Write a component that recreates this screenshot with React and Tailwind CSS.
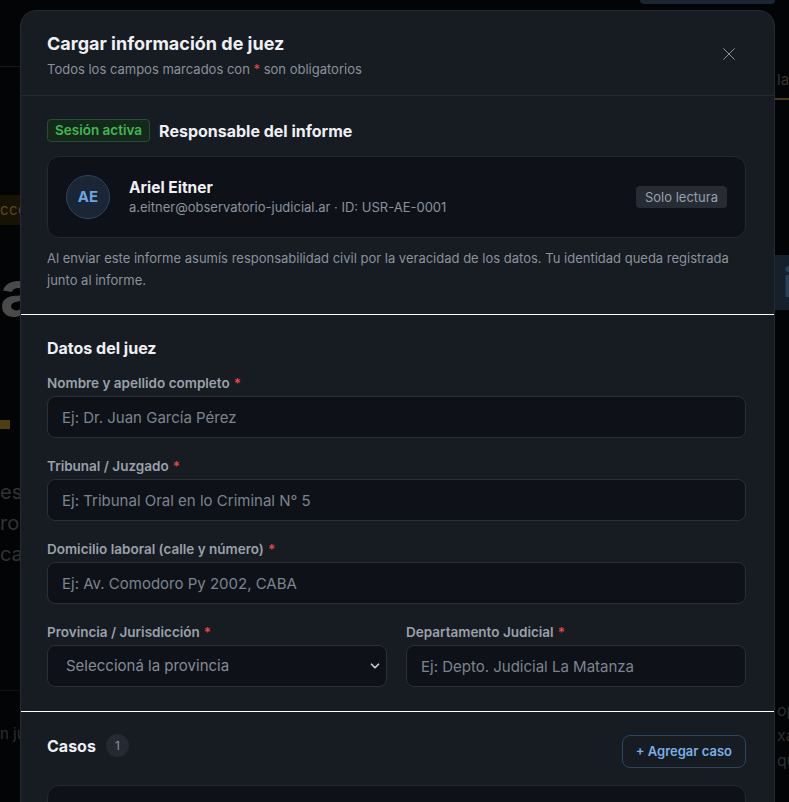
import React from "react";

const Req = () => <span className="ml-[4px] text-[#ef4444]">*</span>;

const Field = ({ label, placeholder }) => (
  <div className="flex flex-col">
    <label className="mb-1 text-[13.5px] leading-[18px] font-semibold text-[#9aa1ab]">
      {label}
      <Req />
    </label>
    <input
      placeholder={placeholder}
      className="h-[42px] w-full rounded-lg border border-[#2a2f38] bg-[#0e1118] px-[14px] text-[15px] text-[#e6e8eb] outline-none placeholder:text-[#7d848e]"
    />
  </div>
);

const SelectField = ({ label, placeholder }) => (
  <div className="flex flex-col">
    <label className="mb-1 text-[13.5px] leading-[18px] font-semibold text-[#9aa1ab]">
      {label}
      <Req />
    </label>
    <div className="flex h-[42px] w-full items-center justify-between rounded-lg border border-[#2a2f38] bg-[#0e1118] pl-[18px] pr-[4px] text-[15px] text-[#858c96]">
      <span>{placeholder}</span>
      <svg width="14" height="14" viewBox="0 0 24 24" fill="none" stroke="#c9cdd2" strokeWidth="3" strokeLinecap="round" strokeLinejoin="round">
        <path d="M6 9l6 6 6-6" />
      </svg>
    </div>
  </div>
);

const Backdrop = () => (
  <div className="flex h-full w-full justify-between text-[#3a3a3a]" style={{ fontFamily: "Inter, 'Liberation Sans', sans-serif" }}>
    {/* left strip */}
    <div className="flex w-[40px] flex-col overflow-hidden">
      <div className="h-[67px] shrink-0 border-b border-[#1a1a1a]" />
      <div className="mt-[128px] flex h-[30px] w-[40px] shrink-0 items-center bg-[#171204] text-[15px] tracking-wide text-[#5a4a22]">cco</div>
      <div className="mt-[38px] h-[60px] shrink-0 text-[64px] leading-[60px] font-bold text-[#4a4a4a]">a</div>
      <div className="mt-[97px] h-[9px] w-[10px] shrink-0 bg-[#4f3e12]" />
      <div className="mt-[48px] flex shrink-0 flex-col text-[20px] leading-[31px] text-[#333333]">
        <span>es</span>
        <span>ron</span>
        <span>ca</span>
      </div>
      <div className="mt-[120px] h-px shrink-0 bg-[#101010]" />
      <div className="mt-[32px] shrink-0 text-[15px] text-[#2e2e2e]">n ju</div>
    </div>
    {/* right strip */}
    <div className="flex w-[150px] flex-col items-end overflow-hidden">
      <div className="mr-[14px] h-[4px] w-[135px] shrink-0 rounded-b-lg bg-[#1b2633]" />
      <div className="mt-[66px] w-[14px] shrink-0 border-b-2 border-[#4a3c16] pb-[8px] pl-[2px] text-[15px] leading-[20px] whitespace-nowrap text-[#333333]">la</div>
      <div className="mt-[155px] flex h-[55px] w-[14px] shrink-0 items-center bg-[#15202c] pl-[8px] text-[40px] font-bold text-[#2c3f52]">i</div>
      <div className="mt-[388px] flex w-[14px] shrink-0 flex-col pl-[2px] text-[16px] leading-[25px] whitespace-nowrap text-[#2e2e2e]">
        <span>opi</span>
        <span>xac</span>
        <span>qu</span>
      </div>
    </div>
  </div>
);

export default function App() {
  return (
    <div className="relative h-[802px] w-full overflow-hidden bg-[#030405]">
      <Backdrop />

      {/* Modal */}
      <div
        className="absolute left-[20px] top-[10px] w-[755px] overflow-hidden rounded-2xl border border-[#262b33] bg-[#171b22]"
        style={{ fontFamily: "Inter, 'Liberation Sans', sans-serif" }}
      >
        {/* Header */}
        <div className="flex items-start justify-between border-b border-[#262b33] pl-[26px] pr-[28px] pt-5 pb-4">
          <div>
            <h2 className="text-[18px] leading-[26px] font-bold text-[#eef0f3]">Cargar información de juez</h2>
            <p className="mt-[2px] text-[13px] leading-[20px] text-[#8b929c]">
              Todos los campos marcados con <span className="text-[#ef4444]">*</span> son obligatorios
            </p>
          </div>
          <button type="button" className="mt-[7px] mr-[1px] flex h-8 w-8 items-center justify-center">
            <svg width="16" height="16" viewBox="0 0 24 24" fill="none" stroke="#8b929c" strokeWidth="1.5" strokeLinecap="round">
              <path d="M4 4l16 16M20 4L4 20" />
            </svg>
          </button>
        </div>

        {/* Responsable */}
        <div className="pl-[26px] pr-[28px] pt-[23px] pb-[23px]">
          <div className="flex items-center gap-[9px]">
            <span className="rounded border border-[#23502f] bg-[#15281c] px-[7px] text-[13.5px] leading-[21px] font-semibold text-[#3fb950]">
              Sesión activa
            </span>
            <span className="text-[16px] leading-[22px] font-bold text-[#eef0f3]">Responsable del informe</span>
          </div>

          <div className="mt-[14px] flex items-center justify-between rounded-xl border border-[#242933] bg-[#0e1118] p-[18px]">
            <div className="flex items-center gap-[19px]">
              <div className="flex h-[44px] w-[44px] items-center justify-center rounded-full border border-[#2c4560] bg-[#1a2636] text-[15px] font-bold text-[#6aa6e0]">
                AE
              </div>
              <div className="flex flex-col">
                <span className="text-[15.5px] leading-[21px] font-bold text-[#eef0f3]">Ariel Eitner</span>
                <span className="text-[13px] leading-[19px] text-[#8b929c]">
                  a.eitner@observatorio-judicial.ar · ID: USR-AE-0001
                </span>
              </div>
            </div>
            <span className="rounded bg-[#262b34] px-[9px] text-[13px] leading-[22px] text-[#9aa1ab]">Solo lectura</span>
          </div>

          <p className="mt-[9px] text-[13px] leading-[22px] text-[#8b929c]">
            Al enviar este informe asumís responsabilidad civil por la veracidad de los datos. Tu identidad queda registrada
            junto al informe.
          </p>
        </div>

        {/* Datos del juez */}
        <div className="border-t border-white pl-[26px] pr-[28px] pt-[23px] pb-[24px]">
          <h3 className="mb-4 text-[16px] leading-[20px] font-bold text-[#eef0f3]">Datos del juez</h3>
          <div className="flex flex-col gap-[19px]">
            <Field label="Nombre y apellido completo" placeholder="Ej: Dr. Juan García Pérez" />
            <Field label="Tribunal / Juzgado" placeholder="Ej: Tribunal Oral en lo Criminal N° 5" />
            <Field label="Domicilio laboral (calle y número)" placeholder="Ej: Av. Comodoro Py 2002, CABA" />
            <div className="grid grid-cols-2 gap-[19px]">
              <SelectField label="Provincia / Jurisdicción" placeholder="Seleccioná la provincia" />
              <Field label="Departamento Judicial" placeholder="Ej: Depto. Judicial La Matanza" />
            </div>
          </div>
        </div>

        {/* Casos */}
        <div className="border-t border-white pl-[26px] pr-[28px] pt-[22px] pb-6">
          <div className="flex items-start justify-between">
            <div className="flex items-center gap-[10px]">
              <span className="text-[16px] leading-[22px] font-bold text-[#eef0f3]">Casos</span>
              <span className="flex h-[23px] w-[23px] items-center justify-center rounded-full bg-[#252a32] text-[12px] text-[#8b929c]">1</span>
            </div>
            <button
              type="button"
              className="mt-px h-[33px] rounded-lg border border-[#2c4560] px-[13px] text-[13px] font-semibold text-[#79b0e8]"
            >
              + Agregar caso
            </button>
          </div>
          <div className="mt-[17px] h-[200px] rounded-xl border border-[#242933] bg-[#0e1118]" />
        </div>
      </div>
    </div>
  );
}
